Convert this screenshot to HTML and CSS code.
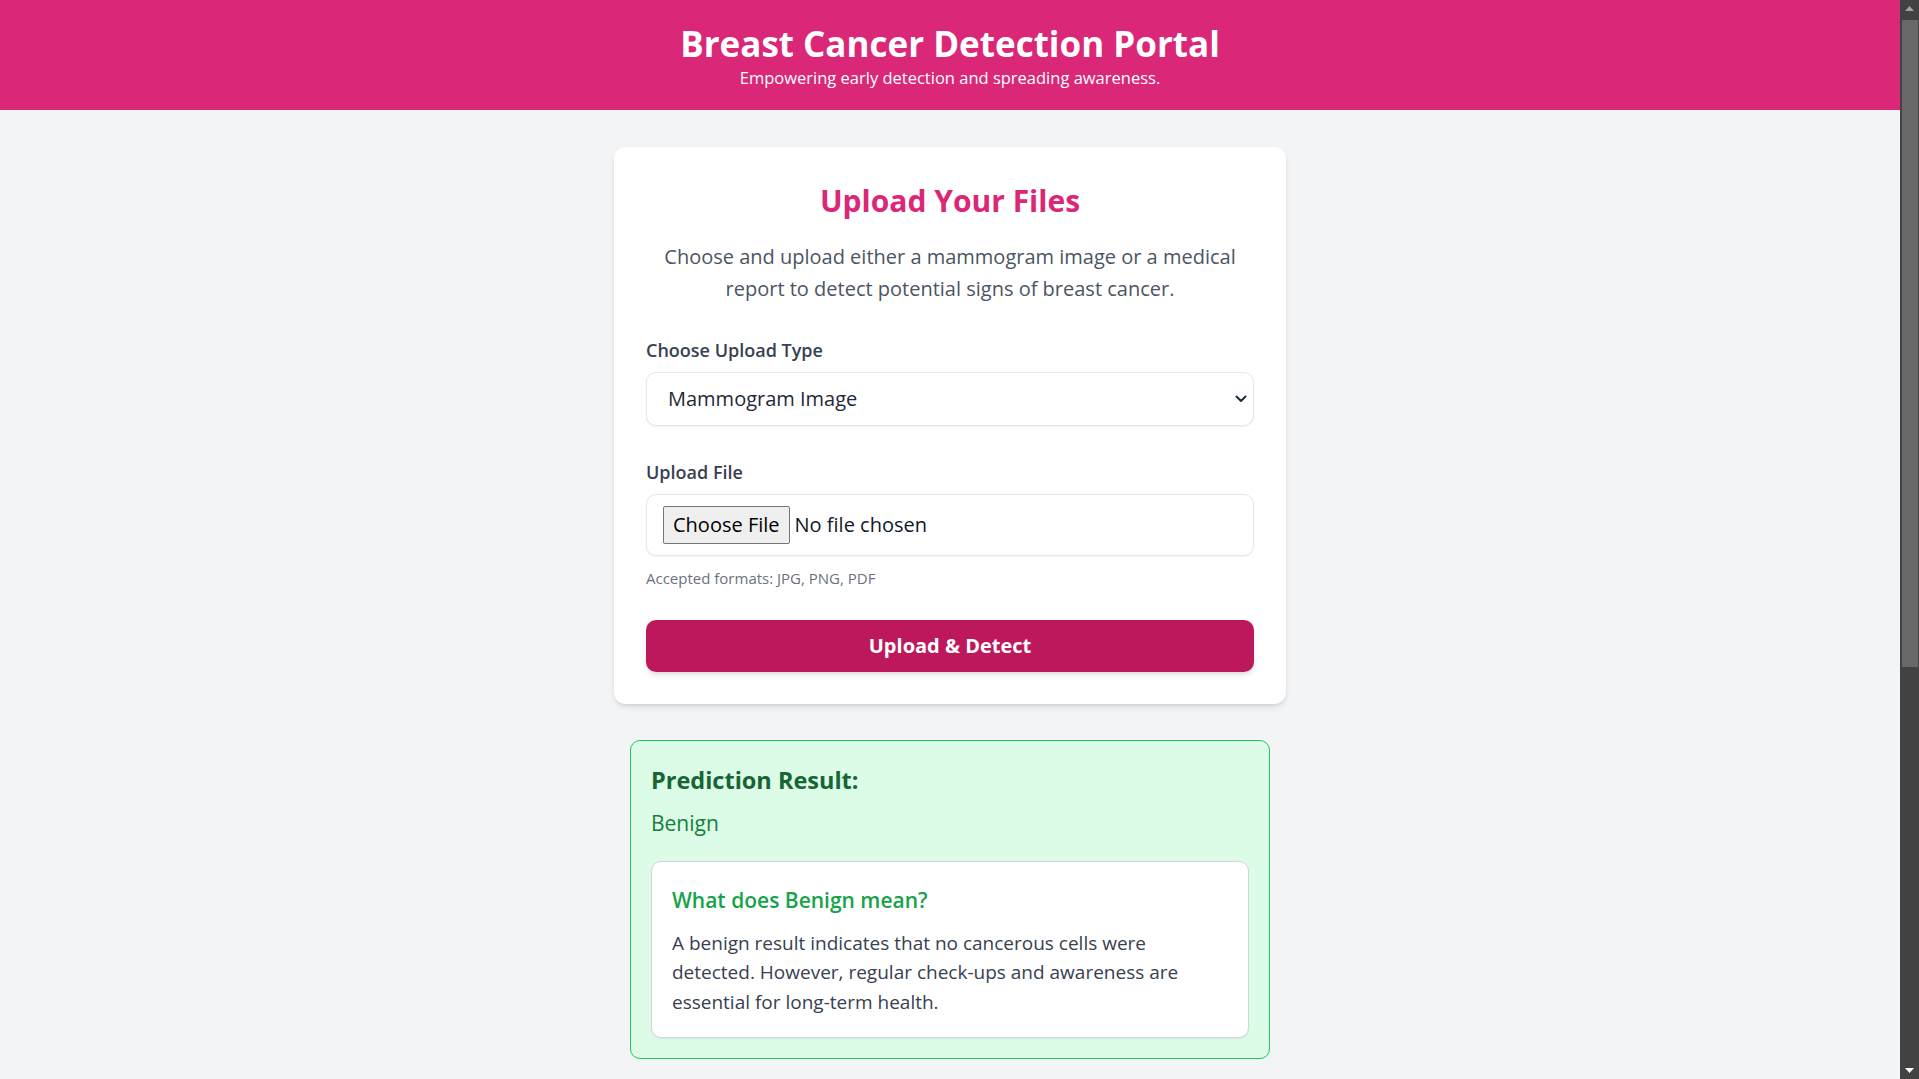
FILE: index.html
```html
<!DOCTYPE html>
<html lang="en">
<head>
<meta charset="utf-8">
<title>Breast Cancer Detection Portal</title>
<link rel="stylesheet" href="styles.css">
</head>
<body>
<header class="site-header">
  <h1 class="site-title">Breast Cancer Detection Portal</h1>
  <p class="site-tagline">Empowering early detection and spreading awareness.</p>
</header>
<main class="main">
  <section class="card">
    <h2 class="card-title">Upload Your Files</h2>
    <p class="card-intro">Choose and upload either a mammogram image or a medical report to detect potential signs of breast cancer.</p>
    <form class="form">
      <div class="field">
        <label class="field-label" for="type">Choose Upload Type</label>
        <div class="select-wrap">
          <select id="type" class="select">
            <option>Mammogram Image</option>
            <option>Medical Report</option>
          </select>
          <svg class="select-chevron" width="12" height="8" viewBox="0 0 12 8"><path d="M1.5 1.5 6 6l4.5-4.5" fill="none" stroke="#1f2937" stroke-width="2" stroke-linecap="round" stroke-linejoin="round"/></svg>
        </div>
      </div>
      <div class="field">
        <label class="field-label" for="file">Upload File</label>
        <input id="file" class="file-input" type="file">
        <p class="field-note">Accepted formats: JPG, PNG, PDF</p>
      </div>
      <button type="button" class="submit">Upload &amp; Detect</button>
    </form>
  </section>
  <section class="result">
    <h3 class="result-title">Prediction Result:</h3>
    <p class="result-value">Benign</p>
    <div class="explain">
      <h4 class="explain-title">What does Benign mean?</h4>
      <p class="explain-text">A benign result indicates that no cancerous cells were detected. However, regular check-ups and awareness are essential for long-term health.</p>
    </div>
  </section>
</main>
<div class="scrollbar" aria-hidden="true">
  <div class="scroll-btn">
    <svg width="9" height="5" viewBox="0 0 9 5"><path d="M0 5 4.5 0 9 5Z" fill="#a3a3a3"/></svg>
  </div>
  <div class="scroll-track"><div class="scroll-thumb"></div></div>
  <div class="scroll-btn">
    <svg width="9" height="5" viewBox="0 0 9 5"><path d="M0 0 4.5 5 9 0Z" fill="#ffffff"/></svg>
  </div>
</div>
</body>
</html>
```
FILE: styles.css
```css
html {
  background: #f3f4f6;
}
body {
  margin: 0;
  padding-right: 19px;
  background: #f3f4f6;
  font-family: "Open Sans", "Noto Sans", sans-serif;
  color: #1f2937;
}

.scrollbar {
  position: fixed;
  top: 0;
  right: 0;
  bottom: 0;
  width: 19px;
  display: flex;
  flex-direction: column;
  background: #424242;
}
.scroll-btn {
  height: 17px;
  flex: none;
  display: flex;
  align-items: center;
  justify-content: center;
}
.scroll-track {
  flex: 1;
  padding: 3px 1px 0 2px;
}
.scroll-thumb {
  height: 647px;
  background: #686868;
}

.site-header {
  background: #db2777;
  color: #ffffff;
  text-align: center;
  padding: 24px 16px 18px;
}
.site-title {
  margin: 0;
  font-size: 35px;
  line-height: 40px;
  font-weight: 700;
}
.site-tagline {
  margin: 0;
  font-size: 16.5px;
  line-height: 28px;
}

.main {
  padding: 37px 16px 684px;
}
.card {
  box-sizing: border-box;
  max-width: 672px;
  margin: 0 auto;
  background: #ffffff;
  border-radius: 12px;
  box-shadow: 0 4px 6px -1px rgba(0, 0, 0, 0.1), 0 2px 4px -2px rgba(0, 0, 0, 0.1);
  padding: 32px;
}
.card-title {
  margin: 0 0 18px;
  font-size: 30px;
  line-height: 44px;
  font-weight: 700;
  color: #db2777;
  text-align: center;
}
.card-intro {
  max-width: 600px;
  margin: 0 auto 31px;
  font-size: 20px;
  line-height: 32px;
  color: #4b5563;
  text-align: center;
}
.field {
  margin-bottom: 32px;
}
.field-label {
  display: block;
  margin-bottom: 8px;
  font-size: 18px;
  line-height: 28px;
  font-weight: 600;
  color: #374151;
}
.select-wrap {
  position: relative;
}
.select {
  display: block;
  width: 100%;
  box-sizing: border-box;
  -webkit-appearance: none;
  appearance: none;
  padding: 12px 40px 12px 21px;
  font-family: inherit;
  font-size: 20px;
  line-height: 28px;
  color: #1f2937;
  background: #ffffff;
  border: 1px solid #e5e7eb;
  border-radius: 10px;
  box-shadow: 0 1px 2px rgba(0, 0, 0, 0.06);
}
.select-chevron {
  position: absolute;
  right: 7px;
  top: 23px;
}
.file-input {
  display: block;
  width: 100%;
  box-sizing: border-box;
  padding: 11px 16px;
  font-family: inherit;
  font-size: 20px;
  line-height: 28px;
  color: #111827;
  background: #ffffff;
  border: 1px solid #e5e7eb;
  border-radius: 10px;
  box-shadow: 0 1px 2px rgba(0, 0, 0, 0.06);
}
.file-input::file-selector-button {
  font-family: inherit;
  font-size: 20px;
  line-height: 26px;
  padding: 5px 9px;
  margin-right: 5px;
  color: #000000;
  background: #efefef;
  border: 1px solid #767676;
  border-radius: 2px;
}
.field-note {
  margin: 12px 0 0;
  font-size: 15px;
  line-height: 20px;
  color: #6b7280;
}
.submit {
  display: block;
  width: 100%;
  padding: 12px;
  font-family: inherit;
  font-size: 20px;
  line-height: 28px;
  font-weight: 700;
  color: #ffffff;
  background: #be185d;
  border: none;
  border-radius: 10px;
  box-shadow: 0 4px 6px -1px rgba(0, 0, 0, 0.1), 0 2px 4px -2px rgba(0, 0, 0, 0.1);
}

.result {
  box-sizing: border-box;
  max-width: 640px;
  margin: 36px auto 0;
  background: #dcfce7;
  border: 1px solid #22c55e;
  border-radius: 10px;
  padding: 20px;
}
.result-title {
  margin: 3px 0 13px;
  font-size: 23.5px;
  line-height: 32px;
  font-weight: 700;
  color: #166534;
}
.result-value {
  margin: 0;
  font-size: 21px;
  line-height: 28px;
  color: #15803d;
}
.explain {
  margin-top: 24px;
  background: #ffffff;
  border: 1px solid #d1d5db;
  border-radius: 10px;
  padding: 20px;
  box-shadow: 0 1px 2px rgba(0, 0, 0, 0.06);
}
.explain-title {
  margin: 2px 0 13px;
  font-size: 21px;
  line-height: 32px;
  font-weight: 600;
  color: #16a34a;
}
.explain-text {
  max-width: 530px;
  margin: 0;
  font-size: 19px;
  line-height: 29.25px;
  color: #374151;
}
```
